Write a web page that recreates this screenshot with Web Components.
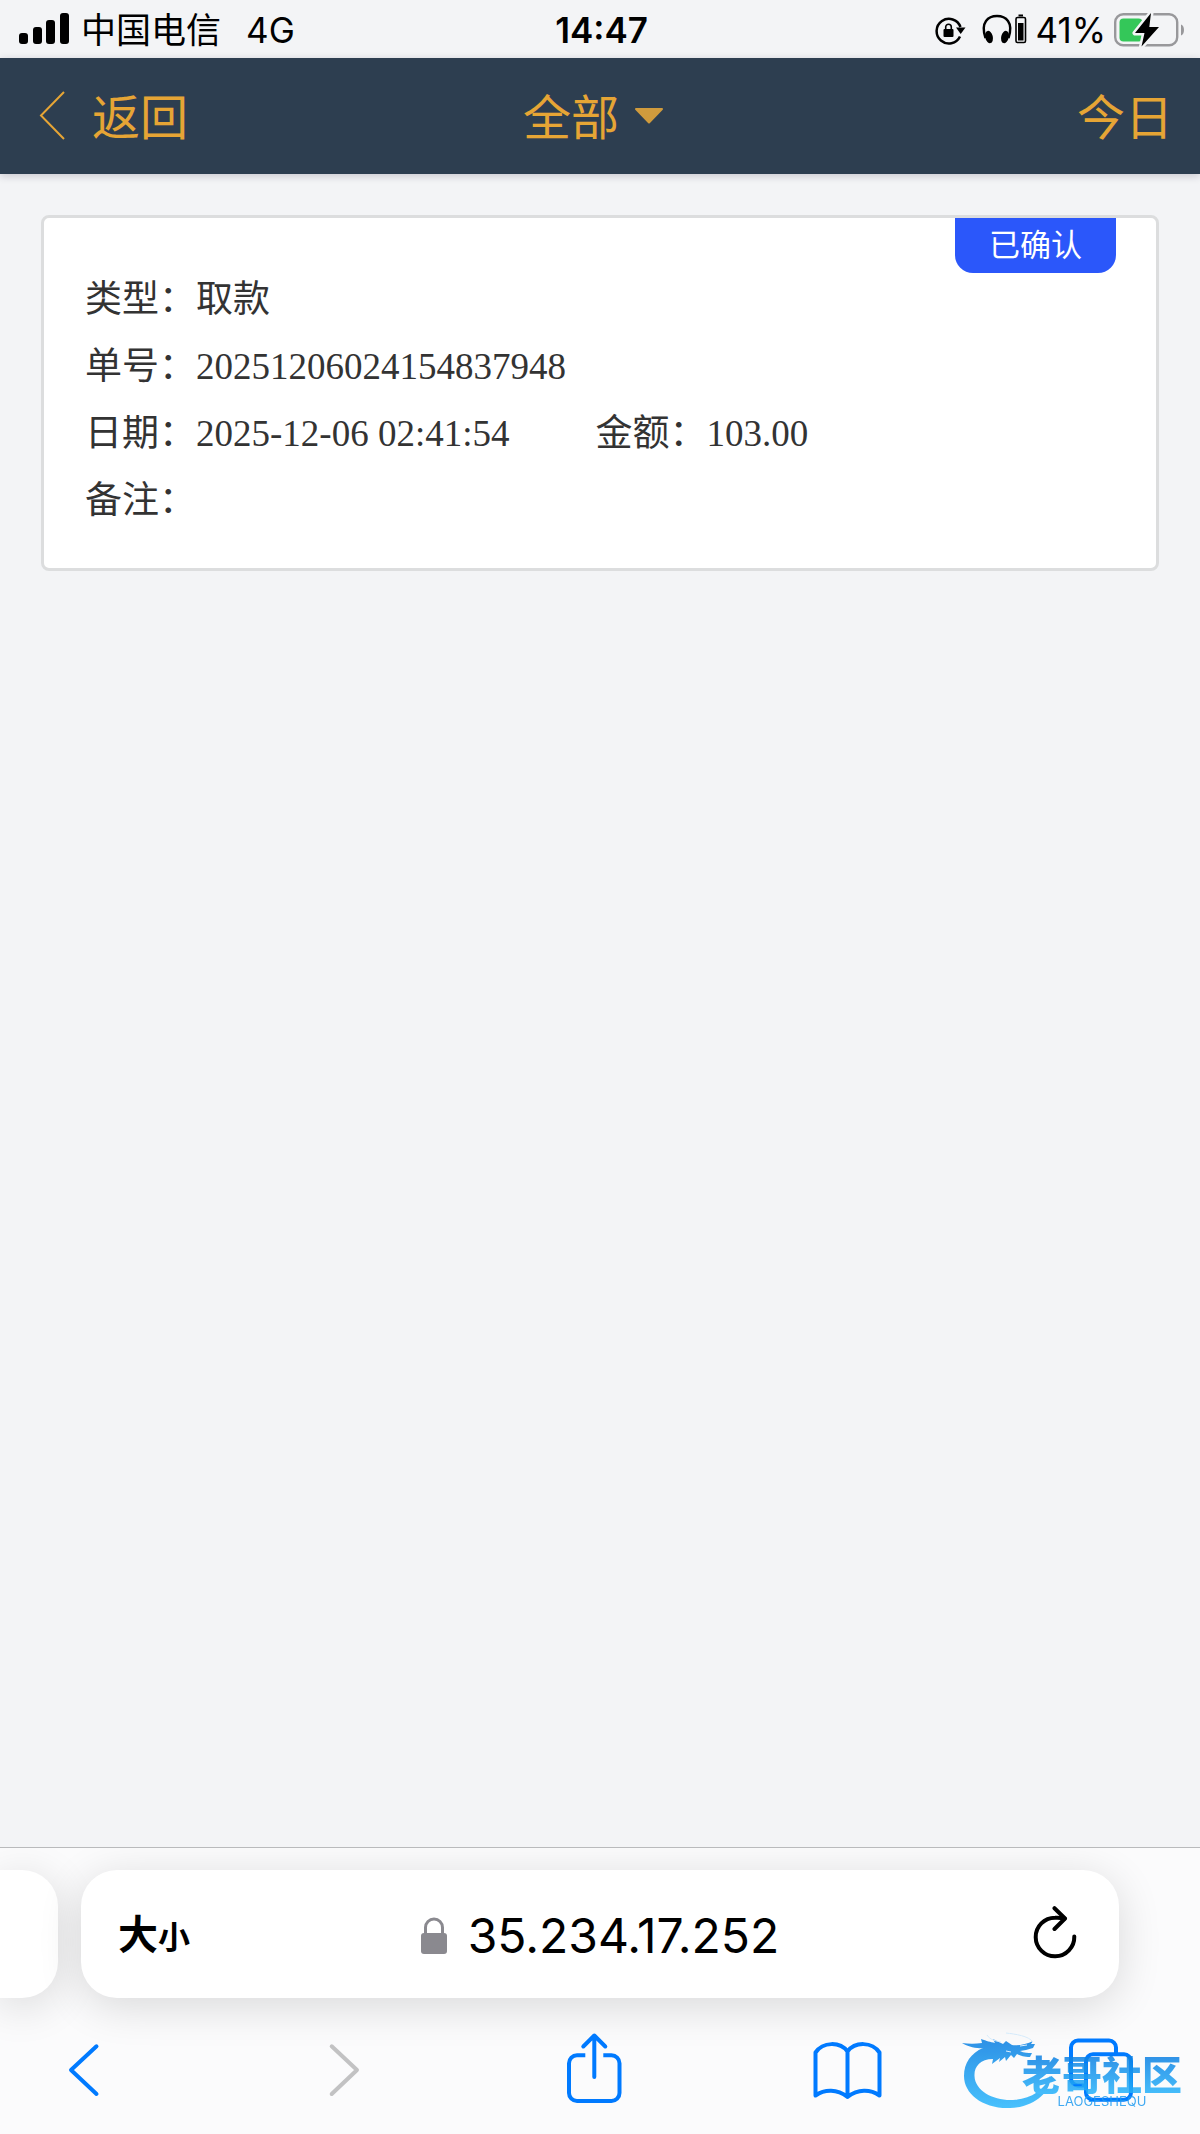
<!DOCTYPE html>
<html lang="zh-CN">
<head>
<meta charset="utf-8">
<meta name="viewport" content="width=device-width, initial-scale=1">
<title>全部</title>
<style>
    body {
        margin: 0;
        background-color: #f3f4f6;
        font-family: Inter, "Noto Sans CJK SC", sans-serif;
    }
</style>
</head>
<body>

<phone-screen>
    <status-bar slot="top" carrier="中国电信" network="4G" time="14:47" battery="41%"></status-bar>
    <page-header slot="top" back="返回" filter="全部" day="今日"></page-header>

    <record-card>
        <span slot="status">已确认</span>
        <record-field label="类型：">取款</record-field>
        <record-field label="单号：">20251206024154837948</record-field>
        <record-field label="日期：" inline>2025-12-06 02:41:54</record-field>
        <record-field label="金额：" inline>103.00</record-field>
        <record-field label="备注："></record-field>
    </record-card>

    <browser-bar slot="bottom">
        <address-bar slot="address">35.234.17.252</address-bar>
        <brand-mark slot="brand">老哥社区<span slot="sub">LAOGESHEQU</span></brand-mark>
    </browser-bar>
</phone-screen>

<script>
class PhoneScreen extends HTMLElement {
    constructor() {
        super();
        this.attachShadow({ mode: 'open' });
    }

    connectedCallback() {
        this.shadowRoot.innerHTML = `
            <style>
                :host {
                    display: flex;
                    flex-direction: column;
                    min-height: 100vh;
                }
                main {
                    flex: 1;
                    padding: 41px;
                }
            </style>
            <slot name="top"></slot>
            <main><slot></slot></main>
            <slot name="bottom"></slot>
        `;
    }
}

class StatusBar extends HTMLElement {
    constructor() {
        super();
        this.attachShadow({ mode: 'open' });
    }

    connectedCallback() {
        this.shadowRoot.innerHTML = `
            <style>
                :host {
                    display: grid;
                    grid-template-columns: 1fr auto 1fr;
                    align-items: center;
                    height: 58px;
                    padding: 0 15px 0 18px;
                    font-size: 35px;
                    line-height: 40px;
                    color: #000;
                }
                svg {
                    display: block;
                    flex: none;
                }
                span, time {
                    padding-top: 2px;
                }
                .left, .right {
                    display: flex;
                    align-items: center;
                }
                .left {
                    gap: 11px;
                }
                .network {
                    margin-left: 14px;
                }
                .right {
                    justify-content: flex-end;
                    gap: 7px;
                }
                time {
                    font-weight: 600;
                }
            </style>
            <div class="left">
                <svg width="52" height="32" viewBox="0 0 52 32" aria-hidden="true">
                    <rect x="1" y="20" width="9" height="11" rx="3"/>
                    <rect x="15" y="14" width="9" height="17" rx="3"/>
                    <rect x="28" y="7" width="9" height="24" rx="3"/>
                    <rect x="42" y="0" width="9" height="31" rx="3"/>
                </svg>
                <span>${this.getAttribute('carrier')}</span>
                <span class="network">${this.getAttribute('network')}</span>
            </div>
            <time>${this.getAttribute('time')}</time>
            <div class="right">
                <!-- rotation lock, headphones with their own battery -->
                <svg width="94" height="32" viewBox="0 0 94 32" aria-hidden="true">
                    <path d="M26 23.500A12.300 12.300 0 1 1 26.500 14" fill="none" stroke="#000" stroke-width="2.500"/>
                    <path d="M22 14.500h9.500l-4.800 6.500z"/>
                    <rect x="9.500" y="16" width="10" height="8" rx="1"/>
                    <path d="M11.700 16.500v-2.500a2.800 2.800 0 0 1 5.600 0v2.500" fill="none" stroke="#000" stroke-width="1.600"/>
                    <path d="M51.500 25C46 9 54.500 3 63 3S80 9 74.500 25" fill="none" stroke="#000" stroke-width="2.400"/>
                    <ellipse cx="55" cy="24" rx="3.800" ry="6.300" transform="rotate(-14 55 24)"/>
                    <ellipse cx="71" cy="24" rx="3.800" ry="6.300" transform="rotate(14 71 24)"/>
                    <rect x="82" y="4.500" width="9.500" height="25" rx="1.500" fill="none" stroke="#000" stroke-width="1.600"/>
                    <rect x="84" y="10" width="5.500" height="17.500"/>
                    <rect x="84.500" y="1.500" width="4.500" height="2"/>
                </svg>
                <span>${this.getAttribute('battery')}</span>
                <svg width="72" height="36" viewBox="0 0 72 36" aria-hidden="true">
                    <rect x="2.200" y="3.200" width="62" height="31" rx="8" fill="none" stroke="#98989b" stroke-width="2.400"/>
                    <path d="M68 13.500v11c4-1 4-10 0-11z" fill="#98989b"/>
                    <rect x="6.500" y="7.500" width="23" height="23" rx="4" fill="#34c759"/>
                    <path d="M38 2L22 22h9.500L28.500 35.500 46 16h-9.700z" fill="#000" stroke="#f3f4f6" stroke-width="5" paint-order="stroke" stroke-linejoin="round"/>
                </svg>
            </div>
        `;
    }
}

class PageHeader extends HTMLElement {
    constructor() {
        super();
        this.attachShadow({ mode: 'open' });
    }

    connectedCallback() {
        this.shadowRoot.innerHTML = `
            <style>
                :host {
                    display: block;
                    background-color: #2d3e50;
                    box-shadow: 0 2px 8px rgba(30, 20, 50, 0.2);
                }
                header {
                    display: grid;
                    grid-template-columns: 1fr auto 1fr;
                    align-items: center;
                    height: 116px;
                    padding: 0 27px 0 38px;
                }
                a, button, select {
                    font: inherit;
                    font-size: 48px;
                    line-height: 72px;
                    color: #e6a535;
                }
                button, select {
                    appearance: none;
                    margin: 0;
                    padding: 0;
                    border: none;
                    background: none;
                }
                a span, select, button {
                    padding-top: 3px;
                }
                a {
                    display: flex;
                    align-items: center;
                    gap: 26px;
                    justify-self: start;
                    text-decoration: none;
                }
                a svg {
                    padding-bottom: 2px;
                }
                label {
                    display: flex;
                    align-items: center;
                    gap: 14px;
                    padding-right: 24px;
                }
                button {
                    justify-self: end;
                }
            </style>
            <header>
                <a href="#">
                    <svg width="28" height="50" viewBox="0 0 28 50" aria-hidden="true">
                        <path d="M26 2L3 25.500 26 49" fill="none" stroke="#e6a535" stroke-width="2"/>
                    </svg>
                    <span>${this.getAttribute('back')}</span>
                </a>
                <label>
                    <select aria-label="${this.getAttribute('filter')}">
                        <option>${this.getAttribute('filter')}</option>
                    </select>
                    <svg width="30" height="18" viewBox="0 0 30 18" aria-hidden="true">
                        <path d="M2 2h26L15 15.500z" fill="#d09b3d" stroke="#d09b3d" stroke-width="2" stroke-linejoin="round"/>
                    </svg>
                </label>
                <button type="button">${this.getAttribute('day')}</button>
            </header>
        `;
    }
}

class RecordCard extends HTMLElement {
    constructor() {
        super();
        this.attachShadow({ mode: 'open' });
    }

    connectedCallback() {
        this.shadowRoot.innerHTML = `
            <style>
                :host {
                    display: block;
                    position: relative;
                    padding: 48px 41px 34px;
                    background-color: #fff;
                    border: 3px solid #dcddde;
                    border-radius: 8px;
                    font-family: "Liberation Serif", "Noto Sans CJK SC", serif;
                    font-size: 37px;
                    line-height: 67px;
                    color: #333;
                }
                .fields {
                    display: flex;
                    flex-wrap: wrap;
                    column-gap: 86px;
                }
                .badge {
                    position: absolute;
                    top: 0;
                    right: 40px;
                    padding: 0 34px 5px;
                    background-color: #2b57fa;
                    border-radius: 0 0 18px 18px;
                    font-family: "Noto Sans CJK SC", sans-serif;
                    font-size: 31px;
                    line-height: 50px;
                    color: #fff;
                }
            </style>
            <div class="badge"><slot name="status"></slot></div>
            <div class="fields"><slot></slot></div>
        `;
    }
}

class RecordField extends HTMLElement {
    constructor() {
        super();
        this.attachShadow({ mode: 'open' });
    }

    connectedCallback() {
        this.shadowRoot.innerHTML = `
            <style>
                :host {
                    display: flex;
                    flex: 0 0 100%;
                }
                :host([inline]) {
                    flex: none;
                }
                .value {
                    white-space: nowrap;
                }
            </style>
            <span>${this.getAttribute('label')}</span>
            <span class="value"><slot></slot></span>
        `;
    }
}

class AddressBar extends HTMLElement {
    constructor() {
        super();
        this.attachShadow({ mode: 'open' });
    }

    connectedCallback() {
        this.shadowRoot.innerHTML = `
            <style>
                :host {
                    display: grid;
                    grid-template-columns: 1fr auto 1fr;
                    align-items: center;
                    height: 128px;
                    padding: 0 42px 0 37px;
                    box-sizing: border-box;
                    background-color: #fff;
                    border-radius: 36px;
                    box-shadow: 0 8px 44px rgba(0, 0, 0, 0.14);
                }
                button {
                    display: flex;
                    align-items: center;
                    padding: 0;
                    border: none;
                    background: none;
                    font: inherit;
                    color: #000;
                }
                svg {
                    display: block;
                }
                .text-size {
                    align-items: baseline;
                    justify-self: start;
                    padding-top: 4px;
                    font-size: 40px;
                    font-weight: 700;
                    line-height: 60px;
                }
                .text-size small {
                    font-size: 32px;
                }
                .address {
                    gap: 20px;
                    padding: 3px 0 0 4px;
                    font-size: 48px;
                    line-height: 60px;
                }
                .reload {
                    justify-self: end;
                    padding-bottom: 2px;
                }
            </style>
            <button class="text-size" type="button">大<small>小</small></button>
            <button class="address" type="button">
                <svg width="28" height="40" viewBox="0 0 28 40" aria-hidden="true">
                    <rect x="1" y="17" width="26" height="21" rx="3" fill="#8a898f"/>
                    <path d="M5.500 18v-6.500a8.500 8.500 0 0 1 17 0V18" fill="none" stroke="#8a898f" stroke-width="3"/>
                </svg>
                <span><slot></slot></span>
            </button>
            <button class="reload" type="button" aria-label="reload">
                <svg width="44" height="54" viewBox="0 0 44 54" fill="none" stroke="#000" stroke-width="4" stroke-linecap="round" stroke-linejoin="round">
                    <path d="M41.300 30.500A19.300 19.300 0 1 1 22 11.700Q27 11.400 31.500 12.500"/>
                    <path d="M21.500 2.200L32 12.500 21.500 23"/>
                </svg>
            </button>
        `;
    }
}

class BrandMark extends HTMLElement {
    constructor() {
        super();
        this.attachShadow({ mode: 'open' });
    }

    connectedCallback() {
        this.shadowRoot.innerHTML = `
            <style>
                :host {
                    display: grid;
                    width: 222px;
                    opacity: 0.85;
                    pointer-events: none;
                }
                svg, .words {
                    grid-area: 1 / 1;
                }
                .words {
                    display: flex;
                    flex-direction: column;
                    justify-self: end;
                    align-items: center;
                    padding-top: 20px;
                }
                .name {
                    background: linear-gradient(#0a7be0, #27b3fb);
                    background-clip: text;
                    -webkit-background-clip: text;
                    color: transparent;
                    font-family: "Noto Sans CJK SC", sans-serif;
                    font-size: 40px;
                    font-weight: 900;
                    line-height: 42px;
                }
                .sub {
                    font-size: 13px;
                    line-height: 14px;
                    color: #1f9bf0;
                }
            </style>
            <svg width="96" height="80" viewBox="0 0 96 80" aria-hidden="true">
                <defs>
                    <linearGradient id="sea" x1="0" y1="0" x2="0" y2="1">
                        <stop offset="0" stop-color="#0a7fe2"/>
                        <stop offset="1" stop-color="#29b7fd"/>
                    </linearGradient>
                </defs>
                <path fill="url(#sea)" d="M2 11c7 1 13 1 20 0l-1-4c6 2 9 3 14 4l-2-4 10 5 3-3 6 4c6 1 15-1 21-4l-2 3 4 0-2 4-7 2-6 1c4 2 8 2 12 2l-2 4c-6 0-9-1-13-3l-3 4-3-3-5 6-1-4-6 5 1-4-8 6 1-5C20 27 14 35 14.500 44 15 59 34 69 53 68 70 67 84 59 90 44 92 58 76 75 50 76 23 77 4 62 4 44 4 31 11 21 23 16 15 17 7 14 2 11z"/>
                <path d="M27 3c3 5 9 6 14 7M46 1c9 1 23 3 27 9" fill="none" stroke="#cfe8fb" stroke-width="1"/>
                <path d="M60 14l7-1M46 19l5 1" stroke="#d8efff" stroke-width="1"/>
            </svg>
            <div class="words">
                <span class="name"><slot></slot></span>
                <span class="sub"><slot name="sub"></slot></span>
            </div>
        `;
    }
}

class BrowserBar extends HTMLElement {
    constructor() {
        super();
        this.attachShadow({ mode: 'open' });
    }

    connectedCallback() {
        this.shadowRoot.innerHTML = `
            <style>
                :host {
                    display: block;
                    position: relative;
                    overflow: hidden;
                    background-color: #fbfbfc;
                    border-top: 1px solid #b9babc;
                }
                .tabs {
                    display: flex;
                    gap: 23px;
                    padding: 22px 81px 34px 0;
                }
                .previous {
                    flex: none;
                    width: 58px;
                    background-color: #fff;
                    border-radius: 0 36px 36px 0;
                    box-shadow: 0 8px 44px rgba(0, 0, 0, 0.14);
                }
                ::slotted([slot="address"]) {
                    flex: 1;
                }
                nav {
                    display: flex;
                    justify-content: space-between;
                    padding: 0 64px 30px 48px;
                }
                button {
                    padding: 0;
                    border: none;
                    background: none;
                    color: #007aff;
                }
                button:disabled {
                    color: #c2c2c3;
                }
                svg {
                    display: block;
                    fill: none;
                    stroke: currentColor;
                    stroke-width: 4;
                    stroke-linecap: round;
                    stroke-linejoin: round;
                }
                /* watermark lies over the tabs button */
                ::slotted([slot="brand"]) {
                    position: absolute;
                    right: 18px;
                    bottom: 22px;
                }
            </style>
            <div class="tabs">
                <div class="previous"></div>
                <slot name="address"></slot>
            </div>
            <nav>
                <button type="button" aria-label="back">
                    <svg width="72" height="72" viewBox="0 0 72 72"><path d="M48.500 14.300L23 38l25.500 24"/></svg>
                </button>
                <button type="button" aria-label="forward" disabled>
                    <svg width="72" height="72" viewBox="0 0 72 72"><path d="M29.700 14.300L55 38 29.700 62"/></svg>
                </button>
                <button type="button" aria-label="share">
                    <svg width="72" height="72" viewBox="0 0 72 72">
                        <path stroke-linecap="butt" d="M29.300 23.300H21a8 8 0 0 0-8 8V61a8 8 0 0 0 8 8H55.500a8 8 0 0 0 8-8V31.300a8 8 0 0 0-8-8H47.300"/>
                        <path d="M38.300 45V3.500M27.300 14.500l11-11 11 11"/>
                    </svg>
                </button>
                <button type="button" aria-label="bookmarks">
                    <svg width="72" height="72" viewBox="0 0 72 72">
                        <path d="M5.500 20.500C13 9.500 30 9.500 37.500 19.500 45 9.500 62 9.500 69.500 20.500V63.500C60 57 48 57 37.500 65 27 57 15 57 5.500 63.500zM37.500 19.500V65"/>
                    </svg>
                </button>
                <button type="button" aria-label="tabs">
                    <svg width="72" height="72" viewBox="0 0 72 72">
                        <rect x="22" y="22.300" width="45" height="45.400" rx="7"/>
                        <path stroke-linecap="butt" d="M52 22V15.500a7 7 0 0 0-7-7H14a7 7 0 0 0-7 7V46.500a7 7 0 0 0 7 7H22"/>
                    </svg>
                </button>
            </nav>
            <slot name="brand"></slot>
        `;
    }
}

customElements.define('phone-screen', PhoneScreen);
customElements.define('status-bar', StatusBar);
customElements.define('page-header', PageHeader);
customElements.define('record-card', RecordCard);
customElements.define('record-field', RecordField);
customElements.define('address-bar', AddressBar);
customElements.define('brand-mark', BrandMark);
customElements.define('browser-bar', BrowserBar);
</script>
</body>
</html>
